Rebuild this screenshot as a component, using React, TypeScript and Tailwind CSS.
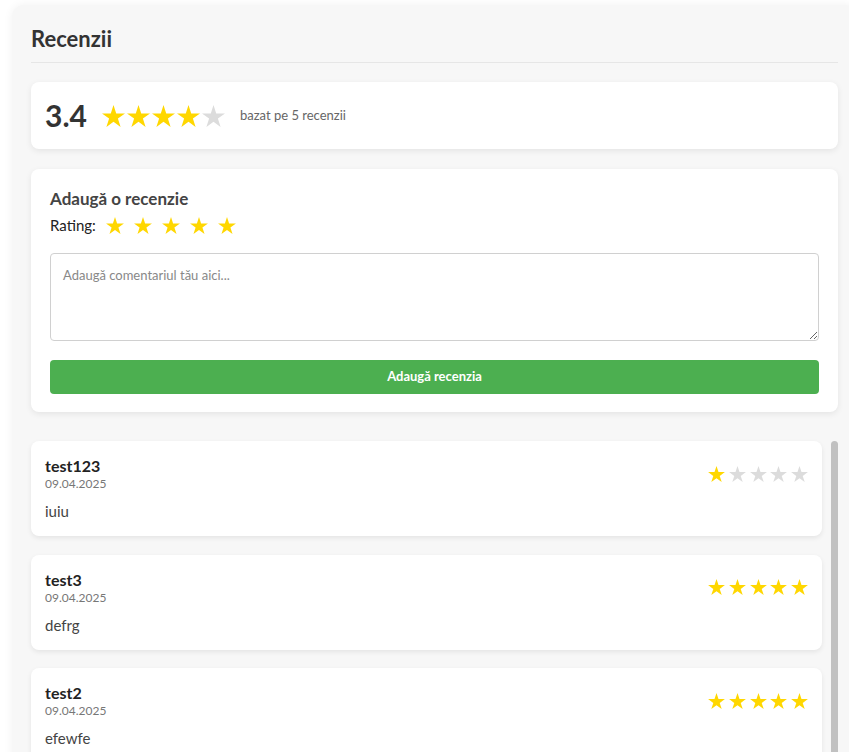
import React from 'react'

// Reviews panel: summary, add-review form and a list of reviews

interface Review {
  user: string
  date: string
  rating: number
  comment: string
}

const reviews: Review[] = [
  { user: 'test123', date: '09.04.2025', rating: 1, comment: 'iuiu' },
  { user: 'test3', date: '09.04.2025', rating: 5, comment: 'defrg' },
  { user: 'test2', date: '09.04.2025', rating: 5, comment: 'efewfe' },
]

const Star = ({ filled, className }: { filled: boolean; className?: string }) => (
  <svg viewBox="0 0 20 19.02" className={className}>
    <polygon
      points="10,0 12.36,7.27 20,7.27 13.82,11.76 16.18,19.02 10,14.53 3.82,19.02 6.18,11.76 0,7.27 7.64,7.27"
      fill={filled ? '#ffd700' : '#dcdcdc'}
    />
  </svg>
)

const Stars = ({ value, size, gap }: { value: number; size: string; gap: string }) => (
  <div className={`flex items-center ${gap}`}>
    {[1, 2, 3, 4, 5].map((i) => (
      <Star key={i} filled={i <= value} className={size} />
    ))}
  </div>
)

export default function App() {
  return (
    <div className="h-[752px] overflow-hidden bg-white font-['Lato','Liberation_Sans',sans-serif]">
      <div className="ml-[12px] mt-[5px] w-[845px] rounded-[12px] bg-[#f7f7f7] px-[19px] pt-5 shadow-[0_0_10px_rgba(0,0,0,0.06)]">
        {/* Heading */}
        <h2 className="border-b border-[#e6e6e6] pb-[9px] text-[22px] font-bold leading-7 text-[#333]">Recenzii</h2>

        {/* Summary */}
        <div className="mt-[19px] flex items-center gap-[15px] rounded-[8px] bg-white px-[14px] py-[15px] shadow-[0_2px_6px_rgba(0,0,0,0.08)]">
          <span className="text-[30px] font-bold leading-[37px] text-[#333]">3.4</span>
          <Stars value={4} size="w-[23px] h-[22px]" gap="gap-[2px]" />
          <span className="text-[13px] text-[#666]">bazat pe 5 recenzii</span>
        </div>

        {/* Add review form */}
        <div className="mt-5 rounded-[8px] bg-white px-[19px] pb-[18px] pt-5 shadow-[0_2px_6px_rgba(0,0,0,0.08)]">
          <h3 className="text-[17px] font-bold leading-5 text-[#444]">Adaugă o recenzie</h3>
          <div className="mt-[4px] flex h-6 items-center gap-[10px]">
            <span className="text-[15px] text-[#222]">Rating:</span>
            <Stars value={5} size="w-[18px] h-[17px]" gap="gap-[10px]" />
          </div>
          <textarea
            placeholder="Adaugă comentariul tău aici..."
            className="mt-4 block h-[88px] w-full rounded-[4px] border border-[#d0d0d0] p-3 text-[13px] text-[#333] placeholder:text-[#888] focus:outline-none"
          />
          <button className="mt-[19px] h-[34px] w-full rounded-[4px] bg-[#4caf50] text-[13px] font-bold text-white">
            Adaugă recenzia
          </button>
        </div>

        {/* Review list with its scrollbar */}
        <div className="mt-[29px] flex gap-[9px]">
          <div className="flex flex-1 flex-col gap-[18.5px]">
            {reviews.map((r) => (
              <div key={r.user} className="rounded-[8px] bg-white px-[14px] py-[15px] shadow-[0_2px_5px_rgba(0,0,0,0.08)]">
                <div className="flex items-center justify-between">
                  <div>
                    <div className="text-base font-bold leading-5 text-[#222]">{r.user}</div>
                    <div className="text-xs leading-[15px] text-[#777]">{r.date}</div>
                  </div>
                  <Stars value={r.rating} size="w-[17px] h-[16px]" gap="gap-[3.7px]" />
                </div>
                <p className="mt-[10px] text-[15px] leading-5 text-[#444]">{r.comment}</p>
              </div>
            ))}
          </div>
          <div className="w-[7px] rounded-full bg-[#c1c1c1]" />
        </div>
      </div>
    </div>
  )
}
